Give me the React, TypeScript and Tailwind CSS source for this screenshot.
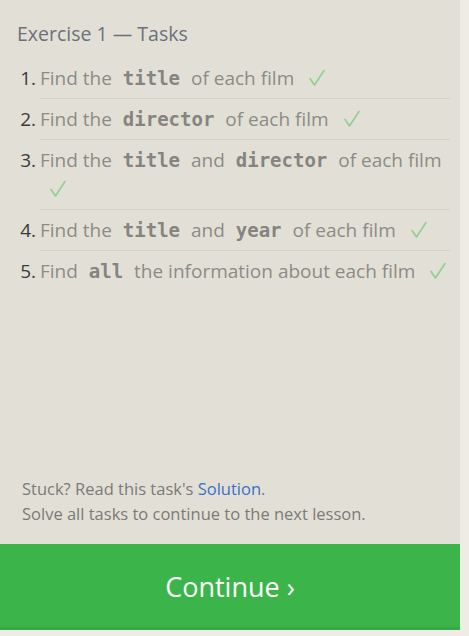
import React from "react";

const Code = ({ children }: { children: React.ReactNode }) => (
  <code className="mx-[6px] font-bold text-[#858480] text-[19px] [font-family:'DejaVu_Sans_Mono','Liberation_Mono',monospace]">
    {children}
  </code>
);

const Check = () => (
  <svg
    className="ml-[9px] inline-block align-[-2px]"
    width="18"
    height="18"
    viewBox="0 0 18 18"
    fill="none"
    stroke="#8fcf8f"
    strokeWidth="1.6"
    strokeLinecap="round"
    strokeLinejoin="round"
  >
    <path d="M2 9.5 L6.5 16 L16 1.5" />
  </svg>
);

const tasks: React.ReactNode[] = [
  <>Find the <Code>title</Code> of each film</>,
  <>Find the <Code>director</Code> of each film</>,
  <>Find the <Code>title</Code> and <Code>director</Code> of each film</>,
  <>Find the <Code>title</Code> and <Code>year</Code> of each film</>,
  <>Find <Code>all</Code> the information about each film</>,
];

export default function App() {
  return (
    <div className="w-[469px] h-[636px] bg-[#efece5] flex items-start [font-family:'Open_Sans','Noto_Sans',sans-serif]">
      <div className="w-[460px] h-[630px] bg-[#e2e0d6] flex flex-col">
        <div className="flex-1 flex flex-col">
          <h1 className="pt-[20px] pl-[17px] text-[19.5px] leading-[28px] text-[#6b7178]">Exercise 1 — Tasks</h1>
          <ol className="mt-[10px] pl-[17px] pr-[10px]">
            {tasks.map((t, i) => (
              <li key={i} className="flex text-[19px]">
                <span className="w-[19px] text-right text-[#3a3a3a] leading-[29px] pt-[6px] pb-[5px]">{i + 1}.</span>
                <div
                  className={
                    "flex-1 ml-[4px] pt-[6px] pb-[5px] leading-[29px] text-[#8c8b86] " +
                    (i < tasks.length - 1 ? "border-b border-[#d4d1c7]" : "")
                  }
                >
                  {t} <Check />
                </div>
              </li>
            ))}
          </ol>
        </div>
        <div className="pl-[22px] pb-[18px] text-[16.5px] leading-[25px] text-[#7b7a76]">
          <p>
            Stuck? Read this task's <a className="text-[#3d6fc6]">Solution</a>.
          </p>
          <p>Solve all tasks to continue to the next lesson.</p>
        </div>
        <div className="h-[86px] bg-[#3bb54a] border-b-[3px] border-[#36a845] flex items-center justify-center text-white text-[27px]">
          <span className="mt-[4px]">Continue ›</span>
        </div>
      </div>
    </div>
  );
}
